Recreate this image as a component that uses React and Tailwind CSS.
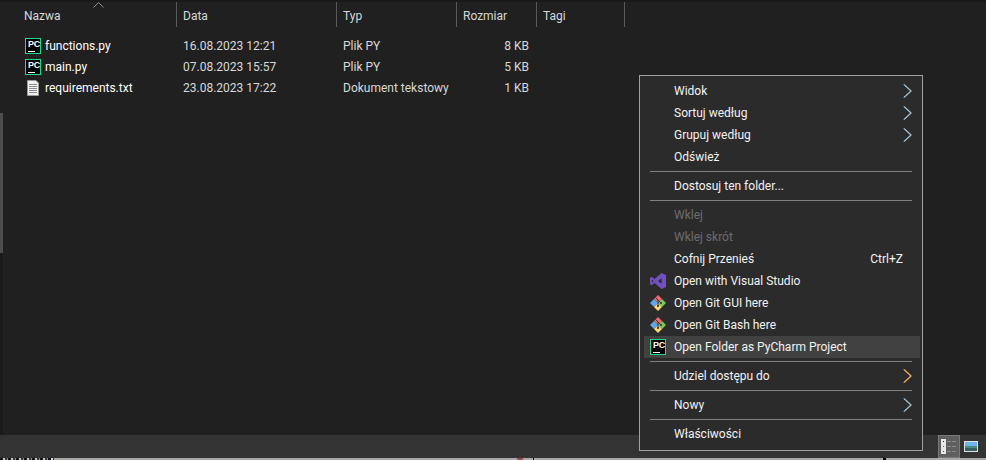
import React from 'react';

const FONT = "font-['Roboto','Noto_Sans',sans-serif]";

const columns = [
  { label: 'Nazwa', width: 'w-[177px]' },
  { label: 'Data', width: 'w-[160px]' },
  { label: 'Typ', width: 'w-[120px]' },
  { label: 'Rozmiar', width: 'w-[80px]' },
  { label: 'Tagi', width: 'w-[88px]' },
];

const files = [
  { name: 'functions.py', date: '16.08.2023 12:21', type: 'Plik PY', size: '8 KB', icon: 'pc' },
  { name: 'main.py', date: '07.08.2023 15:57', type: 'Plik PY', size: '5 KB', icon: 'pc' },
  { name: 'requirements.txt', date: '23.08.2023 17:22', type: 'Dokument tekstowy', size: '1 KB', icon: 'doc' },
];

const menu = [
  { label: 'Widok', arrow: true },
  { label: 'Sortuj według', arrow: true },
  { label: 'Grupuj według', arrow: true },
  { label: 'Odśwież' },
  { sep: true },
  { label: 'Dostosuj ten folder...' },
  { sep: true },
  { label: 'Wklej', disabled: true },
  { label: 'Wklej skrót', disabled: true },
  { label: 'Cofnij Przenieś', shortcut: 'Ctrl+Z' },
  { label: 'Open with Visual Studio', icon: 'vs' },
  { label: 'Open Git GUI here', icon: 'git' },
  { label: 'Open Git Bash here', icon: 'git' },
  { label: 'Open Folder as PyCharm Project', icon: 'pc', active: true },
  { sep: true },
  { label: 'Udziel dostępu do', arrow: true, warm: true },
  { sep: true },
  { label: 'Nowy', arrow: true },
  { sep: true },
  { label: 'Właściwości' },
];

function PcIcon() {
  return (
    <div className="w-[16px] h-[16px] border border-[#21d789] bg-black flex flex-col items-start pl-[2px] overflow-hidden">
      <span className="text-[9px] leading-[9px] mt-[1px] font-bold tracking-[-0.3px] text-white font-['Liberation_Sans',sans-serif]">PC</span>
      <div className="w-[7px] h-px bg-white mt-[2px]" />
    </div>
  );
}

function DocIcon() {
  return (
    <svg width="16" height="16" viewBox="0 0 16 16">
      <path d="M2.5 .5H11L13.5 3V15.5H2.5Z" fill="#f2f2f2" stroke="#9a9a9a" />
      <path d="M4 4.5H12M4 6.5H12M4 8.5H12M4 10.5H12M4 12.5H12" stroke="#8c8c8c" />
    </svg>
  );
}

function VsIcon() {
  return (
    <svg width="16" height="16" viewBox="0 0 16 16">
      <path fillRule="evenodd" d="M11.5 0 16 2V14L11.5 16 4.6 9.9 1.6 12.2 0 11.2V4.8L1.6 3.8 4.6 6.1ZM11.6 5.2 8 8 11.6 10.8ZM1.9 6.4V9.6L3.5 8Z" fill="#7250bd" />
    </svg>
  );
}

function GitIcon() {
  return (
    <svg width="16" height="16" viewBox="0 0 16 16">
      <path d="M8 0 12 4 8 8 4 4Z" fill="#ee6a6a" />
      <path d="M4 4 8 8 4 12 0 8Z" fill="#5ea8f0" />
      <path d="M12 4 16 8 12 12 8 8Z" fill="#7cc85a" />
      <path d="M8 8 12 12 8 16 4 12Z" fill="#f6d878" />
      <path d="M5.5 2.5 8 5 8 11M8 5 11 8" fill="none" stroke="#333" />
      <circle cx="8" cy="11" r="1.1" fill="#333" />
      <circle cx="11" cy="8" r="1.1" fill="#333" />
    </svg>
  );
}

function Chevron({ warm }) {
  return (
    <svg width="9" height="14" viewBox="0 0 9 14">
      <path d="M.5 .5 7.5 7 .5 13.5" fill="none" stroke={warm ? '#c89050' : '#4ba3e3'} />
      <path d="M1.5 .5 8.5 7 1.5 13.5" fill="none" stroke={warm ? '#f0a040' : '#a8a090'} />
      <path d="M1 .5 8 7 1 13.5" fill="none" stroke={warm ? '#f6d0a0' : '#d8e4ee'} strokeWidth=".6" />
    </svg>
  );
}

function ItemIcon({ type }) {
  if (type === 'pc') return <PcIcon />;
  if (type === 'doc') return <DocIcon />;
  if (type === 'vs') return <VsIcon />;
  if (type === 'git') return <GitIcon />;
  return null;
}

function ContextMenu() {
  return (
    <div className="absolute left-[639px] top-[75px] w-[284px] h-[376px] bg-[#2b2b2b] border border-[#a0a0a0] p-[4px] pr-[2px] text-[12px] text-[#f2f2f2]">
      {menu.map((m, i) =>
        m.sep ? (
          <div key={i} className="h-[7px] flex items-center pl-[6px] pr-[8px]">
            <div className="w-full h-px bg-[#808080]" />
          </div>
        ) : (
          <div key={i} className={`h-[22px] flex items-center pr-[8px] ${m.active ? 'bg-[#414141]' : ''} ${m.disabled ? 'text-[#6d6d6d]' : ''}`}>
            <div className="w-[30px] pl-[6px] shrink-0">{m.icon && <ItemIcon type={m.icon} />}</div>
            <span className="flex-1 whitespace-nowrap">{m.label}</span>
            {m.shortcut && <span className="pr-[9px]">{m.shortcut}</span>}
            {m.arrow && <Chevron warm={m.warm} />}
          </div>
        )
      )}
    </div>
  );
}

export default function App() {
  return (
    <div className={`relative w-[986px] h-[460px] overflow-hidden flex flex-col bg-[#202020] text-[12px] ${FONT}`}>
      <div className="flex-1 flex flex-col min-h-0 border-t-2 border-[#191919]">
        {/* column headers */}
        <div className="flex h-[25px] shrink-0 relative text-[#d8d8d8]">
          {columns.map((c, i) => (
            <div key={c.label} className={`${c.width} shrink-0 border-r border-[#5a5a5a] flex items-center pl-[6px] pt-[2px] ${i === 0 ? 'pl-[24px]' : ''}`}>
              {c.label}
            </div>
          ))}
          <svg className="absolute left-[93px] top-0" width="11" height="6" viewBox="0 0 11 6">
            <path d="M.5 5.5 5.5 .5 10.5 5.5" fill="none" stroke="#909090" />
          </svg>
        </div>

        {/* file rows */}
        <div className="mt-[8px] text-[#d8d8d8]">
          {files.map((f) => (
            <div key={f.name} className="flex h-[21px] items-center">
              <div className="w-[177px] shrink-0 flex items-center pl-[25px] gap-[4px] text-white">
                <ItemIcon type={f.icon} />
                <span>{f.name}</span>
              </div>
              <div className="w-[160px] shrink-0 pl-[6px]">{f.date}</div>
              <div className="w-[120px] shrink-0 pl-[6px]">{f.type}</div>
              <div className="w-[72px] shrink-0 text-right">{f.size}</div>
            </div>
          ))}
        </div>
      </div>

      {/* status bar */}
      <div className="h-[23px] bg-[#333333] shrink-0 flex items-stretch justify-end pr-[8px]">
        <div className="w-[22px] h-[23px] bg-[#5f5f5f] border border-[#7a7a7a] flex items-center justify-center">
          <svg width="16" height="15" viewBox="0 0 16 15">
            <rect x="0" y="0" width="5" height="15" fill="#e8e8e8" />
            <rect x="2" y="2" width="1" height="1" fill="#333" />
            <rect x="2" y="7" width="1" height="1" fill="#2a7fd0" />
            <rect x="2" y="12" width="1" height="1" fill="#d02a2a" />
            <path d="M6 2.5h4M11 2.5h4M6 7.5h4M11 7.5h4M6 12.5h4M11 12.5h4" stroke="#8a8a8a" />
          </svg>
        </div>
        <div className="w-[18px] flex items-center justify-end">
          <svg width="14" height="11" viewBox="0 0 14 11">
            <rect x="0" y="0" width="14" height="11" fill="#e0e0e0" />
            <rect x="1" y="1" width="12" height="4" fill="#6db4ea" />
            <rect x="1" y="5" width="12" height="2" fill="#4a8c80" />
            <rect x="1" y="7" width="12" height="3" fill="#35605f" />
          </svg>
        </div>
      </div>

      {/* next window peeking out */}
      <div className="h-[2px] shrink-0 flex bg-[#a8a8a8]">
        <div className="w-[54px] bg-[repeating-linear-gradient(90deg,#111_0,#111_3px,#ccc_3px,#ccc_5px,#334_5px,#334_7px,#a87_7px,#a87_8px)]" />
        <div className="w-[463px]" />
        <div className="w-[6px] bg-[#9c4a50]" />
        <div className="w-[10px]" />
        <div className="w-px bg-black" />
        <div className="w-[349px]" />
        <div className="w-[3px] bg-black" />
      </div>

      {/* left edge: scrollbar of the pane next door */}
      <div className="absolute left-0 top-[113px] w-[3px] h-[322px] bg-[#1a1a1a]">
        <div className="h-[140px] bg-[#4d4d4d]" />
      </div>

      <ContextMenu />
    </div>
  );
}
